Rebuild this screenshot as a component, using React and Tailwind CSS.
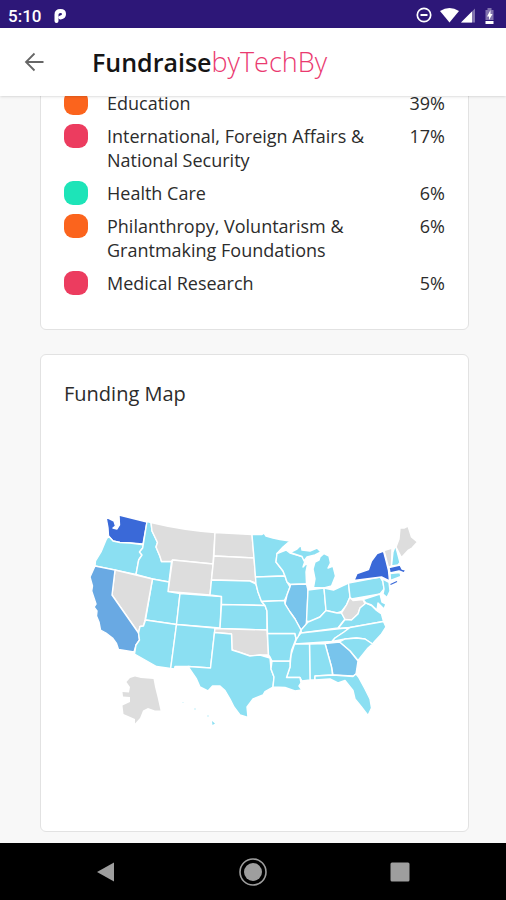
import clsx from "clsx";

const causes = [
  { name: "Education", share: "39%", color: "bg-[#fb641d]" },
  { name: "International, Foreign Affairs & National Security", share: "17%", color: "bg-[#ec3c5f]" },
  { name: "Health Care", share: "6%", color: "bg-[#1de4b8]" },
  { name: "Philanthropy, Voluntarism & Grantmaking Foundations", share: "6%", color: "bg-[#fb641d]" },
  { name: "Medical Research", share: "5%", color: "bg-[#ec3c5f]" },
];

const NONE = "#dddddd";
const LOW = "#8bdff2";
const MID = "#78c4ec";
const HIGH = "#69a9e3";
const TOP = "#3a69d8";

const states = [
  { id: "WA", fill: TOP, d: "M106 518L114 522L115.500 527L113 529L117 530L119.500 526L119 516L147 523L143 545L130 544L120 543.500L113 542L108.500 537L108 529Z" },
  { id: "OR", fill: LOW, d: "M108.500 537L113 542L120 543.500L130 544L143.300 545.700L142.700 549L139.500 553L142 556L138.700 561L136 575.500L95 567L95.500 562L101 553L106 541Z" },
  { id: "ID", fill: LOW, d: "M147 522.500L151 523.500L152 532L157.500 543.500L156 548L160 557.500L161.500 562.500L171.500 562.500L169 583L152.500 580L136 575.500L138.700 561L142 556L139.500 553L142.700 549Z" },
  { id: "MT", fill: NONE, d: "M151 523.500Q182 531 215 533.500L213 565L172.500 561L171.500 562.500L161.500 562.500L160 557.500L156 548L157.500 543.500L152 532Z" },
  { id: "WY", fill: NONE, d: "M172.500 561L213 565L210 596L168 592.500Z" },
  { id: "UT", fill: LOW, d: "M152.500 580L169 583L168 592.500L180 594.500L176.500 625.500L145.500 621Z" },
  { id: "NV", fill: NONE, d: "M115 571L152.500 580L145 621L143.500 627L140 627.500L138.500 634L112 596Z" },
  { id: "CA", fill: HIGH, d: "M95 567L115 571L112 596L138.500 634L139.500 641L136 646L134 653L118.500 650.500L116.500 644.500L112.500 639L106 634L100.500 631L99 623L96.500 617L97 612L94 608L96 605L91.700 592L92.500 587L90 578Z" },
  { id: "AZ", fill: LOW, d: "M145.500 621L176.500 625.500L170.700 669.500L156.500 667.500L134.500 655L136 646L139.500 641L138.500 634L140 627.500L143.500 627Z" },
  { id: "CO", fill: LOW, d: "M180 594.500L221.500 597.500L220 629L176.500 625.500Z" },
  { id: "NM", fill: LOW, d: "M176.500 625.500L215 629L210.500 669L188 667.500L175 667.500L174.500 670L170.700 669.500Z" },
  { id: "ND", fill: NONE, d: "M215 533.500L252 535.500L254 559L214 557Z" },
  { id: "SD", fill: NONE, d: "M214 557L254 559L255.500 578L256 584L250 582L211.500 581Z" },
  { id: "NE", fill: LOW, d: "M211.500 581L250 582L256 585L258 593L261.500 602L265 606.500L221.500 605.500L221.500 597.500L210 596Z" },
  { id: "KS", fill: LOW, d: "M221.500 605.500L265 606.500L267 612L267 631L220 629.500Z" },
  { id: "OK", fill: NONE, d: "M215 629.500L267 631L268.500 656L260 656L250 657L240 653.500L232 651L231.500 635L214.500 633.500Z" },
  { id: "TX", fill: LOW, d: "M214.500 633.500L231.500 635L232 651L240 653.500L250 657L260 656L270 659L271 670L274 678L273 688L265 692.500L263 696L253 700L247 708L248 718.500L240 716L234 708L230 700L225 691.500L220 687L212.500 687L208 692L200 688L196.500 680L188 667.500L210.500 669Z" },
  { id: "MN", fill: LOW, d: "M252 535.500L262 535.500L264 534L266 537L273 539L280 540.500L290 542L283 548L277 554.500L276 563L283 572L285 577L255.500 578L254 559Z" },
  { id: "IA", fill: LOW, d: "M255.500 578L285 577L287 583L290 588L287 596L284.500 601.500L261.500 602.500L258 593L256 585Z" },
  { id: "WI", fill: LOW, d: "M277 554.500L286 551L290 554L302 557.500L305 562L303 568L308 563L306 573L306.500 585L290.500 585.500L287 583L285 577L283 572L276 563Z" },
  { id: "MI-upper", fill: LOW, d: "M290 553.500L297 550L301 546L302 551L310 552L317 549L321 553L315 556L307 558L304 562L302 557.500Z" },
  { id: "MI", fill: LOW, d: "M320 558L324 554.500L329 557L330.500 564L328 569L333 567L335.500 577L331.500 587L324 589L313.500 588.500L315 580L313 570L315 563L319 561Z" },
  { id: "IL", fill: MID, d: "M290.500 585.500L306.500 585L308 591L307 618L306 627L301 631L295 620L290 613L285 605L287 596L290 588Z" },
  { id: "IN", fill: LOW, d: "M308 591L324 589L326 611.500L320 618L310 623L306.500 622Z" },
  { id: "OH", fill: LOW, d: "M324 589L333.500 591L348.500 584L350 598L346.500 606L341.500 612.500L337 614L326 611.500Z" },
  { id: "KY", fill: LOW, d: "M301 631L308 623L320 618L326 611.500L337 614L341.500 614L345 620L338 629L301.500 634Z" },
  { id: "WV", fill: NONE, d: "M350 598L353 601.500L363 600.500L365 605L360 609L358 615L351.500 621L345 620.500L341.500 614L346.500 606Z" },
  { id: "VA", fill: LOW, d: "M345 620.500L351.500 621L358 615L360 609L366 604L371.500 606.500L376.500 611.500L381.500 615L383.500 622.500L350 628.500L338 629.500Z" },
  { id: "TN", fill: LOW, d: "M301 634L350 628.500L344 633L335 639L332 642.500L294.500 645L297.500 638Z" },
  { id: "NC", fill: LOW, d: "M350 628.500L383.500 622.500L386 628L381.500 635L375 642L372.500 645L365 640L356.500 639L345 640L332 642.500L335 639L344 633Z" },
  { id: "SC", fill: LOW, d: "M339.500 643L345 640L356.500 639L365 640L372.500 645L368 649L358 661.500L350 652Z" },
  { id: "GA", fill: MID, d: "M325 644.500L339.500 643L350 652L358 662L356 675L353 677L333 676L331.500 668Z" },
  { id: "AL", fill: LOW, d: "M309.500 645L325 644.500L331.500 668L332.500 676L315 677L314.500 681L310 681Z" },
  { id: "MS", fill: LOW, d: "M294.500 645L309.500 645L310 681L302 682L300 678.500L286.500 678.500L290 668L291 656Z" },
  { id: "LA", fill: LOW, d: "M272 662L290 662L290 668L286.500 678.500L300 678.500L301 684L299 687L302 691L295 692L285 688.500L273 688L274 678L271 670Z" },
  { id: "AR", fill: LOW, d: "M267.500 634.500L295 634.500L296 640L291.500 651.500L290 662L272 662L270 658L268.500 656Z" },
  { id: "MO", fill: LOW, d: "M261.500 602.500L284.500 601.500L285 605L290 613L295 620L301 631L298 638L296 640L295 634.500L267.500 634.500L267 612L265 606.500Z" },
  { id: "FL", fill: LOW, d: "M315 677L333 676L353 677.500L356 675L358.500 678L365 690L370 700L371.500 709L368 716.500L361.500 708L355 700L353 691.500L345 681.500L338 684L330 680L315 681Z" },
  { id: "PA", fill: LOW, d: "M348.500 584L380 578L383 583L384 590L380 595L351.500 600L350 598Z" },
  { id: "NY", fill: TOP, d: "M354 581.500L357 574.500L368.500 570.500L371.500 562L377 554.500L383.500 552L386 561.500L388.500 571.500L389.500 582L381.500 578Z" },
  { id: "NJ", fill: LOW, d: "M382.500 580L389 583.500L390 592L387 598.500L383 595L384 590Z" },
  { id: "MD", fill: LOW, d: "M363 600.500L380 595L382 603L386 605L384 610L378 604L377 611L371.500 606L366 604Z" },
  { id: "VT", fill: NONE, d: "M384 551.500L392 549L391.500 567L388.500 568.500Z" },
  { id: "NH", fill: LOW, d: "M391.500 567L393 553L395.500 546.500L400 563.500L398 566Z" },
  { id: "ME", fill: NONE, d: "M396 548L399 540L400 529L404 529L408 527L411.500 538L417.500 543L412 549L408.500 551L401.500 558.500Z" },
  { id: "MA", fill: TOP, d: "M389 568.500L400 566L402 570L406 571L404 574L399 572L390 574Z" },
  { id: "CT", fill: LOW, d: "M390 574.500L400 573.500L401 577.500L390.500 581.500Z" },
];

function FundingMap() {
  return (
    <svg viewBox="64 505 381 230" className="w-full" role="img" aria-label="Funding Map">
      <g stroke="#fff" strokeWidth="1.4" strokeLinejoin="round">
        {states.map((s) => (
          <path key={s.id} d={s.d} fill={s.fill} />
        ))}
      </g>
      {/* Long Island */}
      <path d="M390.500 585.500L397 582.500" stroke={TOP} strokeWidth="1.200" />
      {/* Alaska */}
      <path
        fill={NONE}
        d="M126.500 683L130 679L135 677.500L141 679L153.500 680L155 688L157.500 698L160.500 711.500L155 711.500L148 709L143 711.500L140 719L135 724.500L135 720L123.500 715L122.500 706.500L130 703L130 698L123 697.500L122.500 693L129 693.500L130 688Z"
      />
      {/* Hawaii */}
      <g fill={LOW}>
        <circle cx="183" cy="703.500" r="0.600" opacity="0.500" />
        <circle cx="195" cy="710" r="0.800" opacity="0.600" />
        <circle cx="208" cy="717" r="0.800" opacity="0.600" />
        <path d="M212 722L215 724.500L212.500 726Z" />
      </g>
    </svg>
  );
}

const StatusBar = () => (
  <div className="h-7 shrink-0 bg-[#2d1778] text-white flex items-center justify-between pl-2 pr-3 pt-1">
    <div className="flex items-center gap-3">
      <span className="font-[Roboto,sans-serif] text-[17px] leading-6 font-medium">5:10</span>
      <svg width="14" height="16" viewBox="0 0 14 16" fill="none">
        <path d="M3.500 13V6.500Q3.500 3 7.500 3Q11 3 11 6Q11 9 7.500 9.500" stroke="currentColor" strokeWidth="4" strokeLinecap="round" />
      </svg>
    </div>
    <div className="flex items-center">
      <svg width="78" height="18" viewBox="415 6 78 18" fill="none">
        <circle cx="423" cy="14" r="6.700" stroke="currentColor" strokeWidth="1.700" />
        <path d="M419.500 14H426.500" stroke="currentColor" strokeWidth="2" />
        <path d="M439 10Q448.500 4 458 10L448.500 21.500Z" fill="currentColor" />
        <path d="M460 21.500L474 7.500V21.500Z" fill="currentColor" opacity="0.400" />
        <path d="M460 21.500L471 10.500V21.500Z" fill="currentColor" />
        <path d="M484.500 9H486.500V7H490.500V9H492.500V19H484.500Z" fill="currentColor" opacity="0.400" />
        <path d="M484.500 20H492.500V23H484.500Z" fill="currentColor" />
        <path d="M489.500 9L486 15.500H488V19L491.500 13H489.500Z" fill="currentColor" />
      </svg>
    </div>
  </div>
);

const Header = () => (
  <header className="relative z-10 h-17 shrink-0 bg-white shadow-sm flex items-center px-6 gap-12">
    <button type="button" aria-label="Back" className="text-[#666]">
      <svg width="20" height="20" viewBox="0 0 20 20" fill="none" stroke="currentColor" strokeWidth="1.800">
        <path d="M19.500 10H2M10.500 1.500L2 10L10.500 18.500" />
      </svg>
    </button>
    <h1 className="text-[25px] leading-8 font-semibold text-[#151515]">
      Fundraise<span className="text-[27px] font-light text-[#ea3a70]">byTechBy</span>
    </h1>
  </header>
);

const Card = ({ className, children }) => (
  <section className={clsx("bg-white border border-[#e2e2e2] rounded-md px-[23px]", className)}>
    {children}
  </section>
);

const NavBar = () => (
  <nav className="h-[57px] shrink-0 bg-black text-[#9e9e9e] grid grid-cols-3 items-center justify-items-center px-8">
    <button type="button" aria-label="Back">
      <svg width="20" height="20" viewBox="0 0 20 20" fill="currentColor">
        <path d="M1 10L18 0.500V19.500Z" />
      </svg>
    </button>
    <button type="button" aria-label="Home">
      <svg width="28" height="28" viewBox="0 0 28 28" fill="none">
        <circle cx="14" cy="14" r="13" stroke="currentColor" strokeWidth="1.600" />
        <circle cx="14" cy="14" r="9" fill="currentColor" />
      </svg>
    </button>
    <button type="button" aria-label="Recent apps">
      <svg width="20" height="20" viewBox="0 0 20 20" fill="currentColor">
        <rect x="0.500" y="0.500" width="19" height="19" rx="1.500" />
      </svg>
    </button>
  </nav>
);

export default function App() {
  return (
    <div className="h-screen flex flex-col bg-[#f8f8f8] text-[#2c2c2c] font-['Open_Sans',sans-serif]">
      <StatusBar />
      <Header />

      <main className="flex-1 min-h-0 overflow-hidden pl-10 pr-[37px]">
        {/* Scrolled down, so the first card starts behind the header */}
        <div className="-mt-[30px] flex flex-col gap-6">
          <Card className="pt-6 pb-[34px]">
            <ul className="flex flex-col gap-[9px]">
              {causes.map((cause) => (
                <li key={cause.name} className="flex items-start gap-[19px] text-[18px] leading-6">
                  <span className={clsx("size-6 shrink-0 rounded-[9px]", cause.color)} />
                  <span className="flex-1">{cause.name}</span>
                  <span className="w-12 shrink-0 text-right">{cause.share}</span>
                </li>
              ))}
            </ul>
          </Card>

          <Card className="pt-[25px] pb-[97px]">
            <h2 className="text-[20px] leading-7 mb-24">Funding Map</h2>
            <FundingMap />
          </Card>
        </div>
      </main>

      <NavBar />
    </div>
  );
}
